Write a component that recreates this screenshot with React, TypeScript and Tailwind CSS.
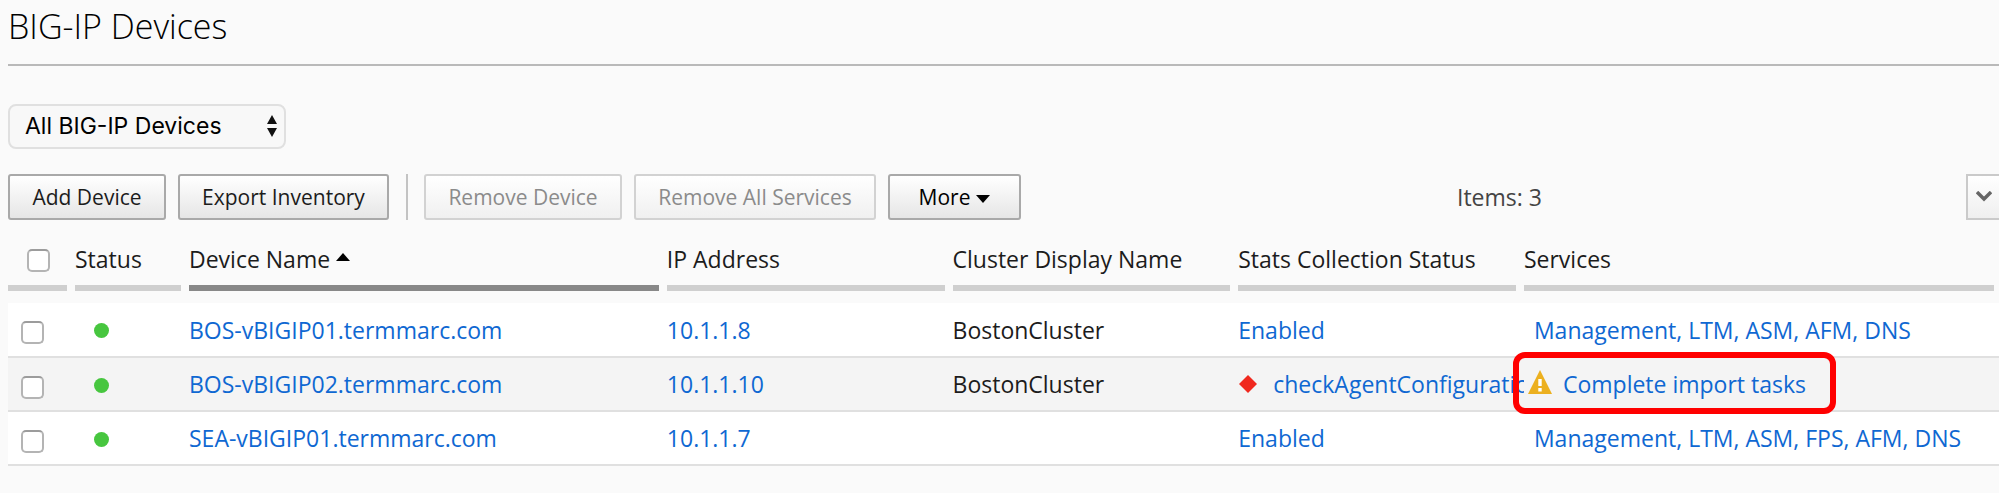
import type { ReactNode } from 'react';

const link = 'text-[#0f68d2]';

function Th({ children, sorted = false, last = false }: { children: ReactNode; sorted?: boolean; last?: boolean }) {
  return (
    <th scope="col" aria-sort={sorted ? 'ascending' : undefined} className={`p-0 text-left font-normal ${last ? 'pr-[5px]' : 'pr-2'}`}>
      <div className={`flex h-[63px] items-center gap-[6px] border-b-6 pt-1 ${sorted ? 'border-[#888888]' : 'border-[#cfcfcf]'}`}>{children}</div>
    </th>
  );
}

function Tick({ label }: { label: string }) {
  return (
    <input
      type="checkbox"
      aria-label={label}
      className="block size-[23px] appearance-none rounded-[5px] border-2 border-[#b4b4b4] border-t-[#9c9c9c] bg-white checked:bg-[#1a6fd0]"
    />
  );
}

const button =
  'h-[46px] rounded-[3px] border-2 bg-linear-to-b from-white text-center text-[21px] leading-7 whitespace-nowrap';

type Device = { name: string; ip: string; cluster: string; services: string; failed?: boolean };

const devices: Device[] = [
  { name: 'BOS-vBIGIP01.termmarc.com', ip: '10.1.1.8', cluster: 'BostonCluster', services: 'Management, LTM, ASM, AFM, DNS' },
  { name: 'BOS-vBIGIP02.termmarc.com', ip: '10.1.1.10', cluster: 'BostonCluster', services: '', failed: true },
  { name: 'SEA-vBIGIP01.termmarc.com', ip: '10.1.1.7', cluster: '', services: 'Management, LTM, ASM, FPS, AFM, DNS' },
];

export default function App() {
  return (
    <main className="min-h-screen overflow-x-hidden bg-[#fafafa] pl-2 font-['Open_Sans','Noto_Sans',sans-serif] text-[23px] leading-8 text-[#1c1c1c]">
      <h1 className="h-[66px] border-b-2 border-[#b9b9b9] pt-1 text-[34px] leading-11 font-light text-black">BIG-IP Devices</h1>

      <div className="mt-[38px] flex">
        <div className="relative">
          <select
            aria-label="Device filter"
            className="h-[45px] w-[278px] appearance-none rounded-lg border-2 border-[#e0e0e0] bg-[#f8f8f8] pb-[2px] pl-[15px] font-[Inter,sans-serif] text-[23px] text-black"
          >
            <option>All BIG-IP Devices</option>
          </select>
          <svg className="pointer-events-none absolute top-[11px] right-2 h-[22px] w-3" viewBox="0 0 12 22" aria-hidden="true">
            <path d="M6 0 11 9H1ZM1 13h10L6 22Z" fill="#111" />
          </svg>
        </div>
      </div>

      <div className="mt-[25px] flex items-center">
        <button type="button" className={`${button} w-[158px] border-[#a9a9a9] to-[#e6e6e6]`}>Add Device</button>
        <button type="button" className={`${button} ml-3 w-[211px] border-[#a9a9a9] to-[#e6e6e6]`}>Export Inventory</button>
        <div className="ml-[17px] h-[46px] w-[2px] bg-[#c3c3c3]" />
        <button type="button" disabled className={`${button} ml-4 w-[198px] border-[#d2d2d2] to-[#f0f0f0] text-[#8b8b8b]`}>Remove Device</button>
        <button type="button" disabled className={`${button} ml-3 w-[242px] border-[#d2d2d2] to-[#f0f0f0] text-[#8b8b8b]`}>Remove All Services</button>
        <button type="button" className={`${button} ml-3 flex w-[133px] items-center justify-center gap-[6px] border-[#a9a9a9] to-[#e6e6e6] text-black`}>
          More
          <svg className="mt-1 h-2 w-[14px]" viewBox="0 0 14 8" aria-hidden="true"><path d="M0 0h14L7 8Z" fill="#000" /></svg>
        </button>
        <div className="flex flex-1 justify-between">
          <span className="ml-[436px] self-center text-[#444444]">Items: 3</span>
          <button type="button" aria-label="Filter options" className="flex h-[46px] w-[33px] items-center justify-center border-2 border-r-0 border-[#cacaca] bg-linear-to-b from-white to-[#efefef]">
            <svg className="h-3 w-4" viewBox="0 0 16 12" aria-hidden="true"><path d="m1 1 7 7 7-7" fill="none" stroke="#666" strokeWidth="3.4" /></svg>
          </button>
        </div>
      </div>

      <table className="mt-2 w-full table-fixed border-collapse">
        <colgroup>
          <col className="w-[67px]" />
          <col className="w-[114px]" />
          <col className="w-[24%]" />
          <col className="w-[14.35%]" />
          <col className="w-[14.35%]" />
          <col className="w-[14.35%]" />
          <col />
        </colgroup>
        <thead>
          <tr>
            <Th><span className="pt-1 pl-[19px]"><Tick label="Select all devices" /></span></Th>
            <Th>Status</Th>
            <Th sorted>
              Device Name
              <svg className="mb-1 h-2 w-[14px]" viewBox="0 0 14 8" aria-hidden="true"><path d="M0 8h14L7 0Z" fill="#000" /></svg>
            </Th>
            <Th>IP Address</Th>
            <Th>Cluster Display Name</Th>
            <Th>Stats Collection Status</Th>
            <Th last>Services</Th>
          </tr>
        </thead>
        <tbody className="before:block before:h-3">
          {devices.map((d) => (
            <tr key={d.name} className={`h-[54px] border-b-2 border-[#e0e0e0] ${d.failed ? 'bg-[#f4f4f4]' : 'bg-white'}`}>
              <td className="p-0 pt-[6px] pl-[13px]"><Tick label={`Select ${d.name}`} /></td>
              <td className="p-0 pt-[2px] pl-[19px]">
                <svg role="img" aria-label="Available" className="block size-[15px]" viewBox="0 0 15 15"><circle cx="7.5" cy="7.5" r="7.5" fill="#47c63f" /></svg>
              </td>
              <td className="p-0"><a href="#device" className={link}>{d.name}</a></td>
              <td className="p-0"><a href="#address" className={link}>{d.ip}</a></td>
              <td className="p-0">{d.cluster}</td>
              <td className="p-0">
                {d.failed ? (
                  <div className="flex items-center gap-4 overflow-hidden pl-px whitespace-nowrap">
                    <svg className="h-[18px] w-[18px] shrink-0" viewBox="0 0 18 18" aria-hidden="true"><path d="m9 0 9 9-9 9-9-9Z" fill="#f0281e" /></svg>
                    <a href="#stats" className={link}>checkAgentConfiguration</a>
                  </div>
                ) : (
                  <a href="#stats" className={link}>Enabled</a>
                )}
              </td>
              <td className="p-0 whitespace-nowrap">
                {d.failed ? (
                  <div className="relative flex items-center gap-[11px] pl-1">
                    <svg className="mb-1 h-6 w-6" viewBox="0 0 24 24" aria-hidden="true">
                      <path d="M12 0 24 24H0Z" fill="#ecb01f" />
                      <path d="M10.3 9h3.4v7h-3.4zM10.3 18h3.4v3.4h-3.4z" fill="#fff" />
                    </svg>
                    <a href="#import" className={link}>Complete import tasks</a>
                    <span className="pointer-events-none absolute -top-[16px] -left-[11px] h-[62px] w-[323px] rounded-xl border-6 border-[#ff0000]" />
                  </div>
                ) : (
                  <a href="#services" className={`${link} pl-[10px]`}>{d.services}</a>
                )}
              </td>
            </tr>
          ))}
        </tbody>
      </table>
    </main>
  );
}
